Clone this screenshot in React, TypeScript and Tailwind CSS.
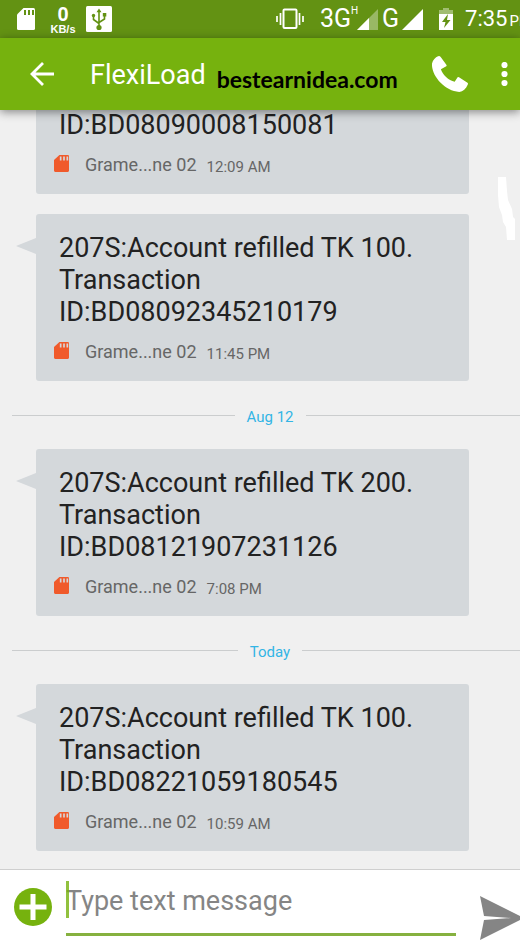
import { Fragment } from "react";

type Message = {
  id: string;
  time: string;
  amount?: number;
  day?: string;
};

// The oldest entry has no amount: only the tail of its text is in view
const messages: Message[] = [
  { id: "BD08090008150081", time: "12:09 AM" },
  { id: "BD08092345210179", amount: 100, time: "11:45 PM" },
  { id: "BD08121907231126", amount: 200, time: "7:08 PM", day: "Aug 12" },
  { id: "BD08221059180545", amount: 100, time: "10:59 AM", day: "Today" },
];

export default function App() {
  return (
    <div className="flex min-h-screen flex-col overflow-hidden bg-[#f0f0f0] font-['Roboto',sans-serif]">
      <StatusBar />
      <AppBar />

      {/* Conversation, newest message at the bottom */}
      <main className="relative flex flex-1 flex-col justify-end pb-[18px]">
        {messages.map((message, index) => (
          <Fragment key={message.id}>
            {message.day ? (
              <DayDivider label={message.day} />
            ) : (
              index > 0 && <div className="h-5 shrink-0" />
            )}
            <Bubble message={message} />
          </Fragment>
        ))}
        <svg className="absolute top-[67px] right-1 h-16 w-5" viewBox="0 0 20 64" fill="#fff" aria-hidden="true">
          <path d="M2 0h8l1 14 1 9 4 9 1 8 2 2v21h-8l-1-13-3-5-1-7-3-8-1-12z" />
        </svg>
      </main>

      <Composer />
    </div>
  );
}

function StatusBar() {
  return (
    <div className="flex h-[38px] shrink-0 items-center overflow-hidden bg-[#639213] pl-[17px] text-white">
      <SdCard className="h-[22px] w-[18px] shrink-0" fill="#fff" slots="#639213" />
      <div className="ml-3.5 flex w-7 shrink-0 flex-col items-center font-['Liberation_Sans',sans-serif] font-bold">
        <span className="text-xl leading-5">0</span>
        <span className="text-[11px] leading-[10px]">KB/s</span>
      </div>
      <svg className="ml-[9px] h-[26px] w-[26px] shrink-0" viewBox="0 0 26 26" aria-hidden="true">
        <rect width="26" height="26" rx="1.5" fill="#fff" />
        <g fill="none" stroke="#639213" strokeWidth="1.6">
          <path d="M13 5v16M7.500 9v4.500l5.500 4M18.500 9v4l-5.500 3.500" />
        </g>
        <g fill="#639213">
          <path d="M13 2.500l2.500 3.800h-5z" />
          <circle cx="13" cy="21.500" r="2.600" />
          <circle cx="7.500" cy="9.500" r="1.700" />
          <path d="M16.800 7h3.500v3.500h-3.500z" />
        </g>
      </svg>

      <div className="-mr-3 ml-auto flex shrink-0 items-center">
        <svg className="h-[22px] w-7" viewBox="0 0 28 22" aria-hidden="true">
          <rect x="7.500" y="1.500" width="13" height="18.500" rx="1" fill="none" stroke="#fff" strokeWidth="2" />
          <path d="M1 8v6M4.500 5v12M23.500 5v12M27 8v6" stroke="#fff" strokeWidth="1.700" />
        </svg>
        <span className="ml-4 flex w-[37px] items-start text-[25px] leading-7">
          3G<span className="text-[10px] leading-3">H</span>
        </span>
        <svg className="h-[21px] w-[21px]" viewBox="0 0 21 21" aria-hidden="true">
          <path d="M0 21L21 0v21z" fill="#fff" opacity=".35" />
          <path d="M0 21L12 9v12z" fill="#fff" />
        </svg>
        <span className="ml-1 w-[18px] text-[25px] leading-7">G</span>
        <svg className="ml-0.5 h-[21px] w-[21px]" viewBox="0 0 21 21" fill="#fff" aria-hidden="true">
          <path d="M0 21L21 0v21z" />
        </svg>
        <svg className="ml-4 h-[22px] w-3.5" viewBox="0 0 14 22" aria-hidden="true">
          <path d="M4 0h6v2h4v5H0V2h4z" fill="#fff" opacity=".4" />
          <path d="M0 6h14v16H0z" fill="#fff" />
          <path d="M9 6L3 14h3.500L5 20l6.500-8H8z" fill="#639213" />
        </svg>
        <span className="ml-3 flex items-baseline gap-0.5 pt-0.5 text-[22px] leading-7">
          7:35<span className="text-[15px]">PM</span>
        </span>
      </div>
    </div>
  );
}

function AppBar() {
  return (
    <header className="z-10 flex h-[72px] shrink-0 items-center bg-[#76b20e] pl-[30px] shadow-[0_2px_9px_rgba(0,0,0,0.45)]">
      <button aria-label="Back">
        <svg className="h-6 w-6" viewBox="0 0 24 24" fill="none" stroke="#fff" strokeWidth="2.800" aria-hidden="true">
          <path d="M24 12H3M13 1L2 12l11 11" />
        </svg>
      </button>
      <h1 className="ml-9 pt-0.5 text-[27px] leading-8 text-white">FlexiLoad</h1>
      <span className="ml-[11px] pt-2.5 font-['Lato',sans-serif] text-[23px] leading-6 font-bold text-black">
        bestearnidea.com
      </span>
      <button className="ml-auto" aria-label="Call">
        <svg className="h-9 w-9" viewBox="0 0 36 36" fill="#fff" aria-hidden="true">
          <path d="M7.300 0L8.500.8l6.200 8.500-.4.900-5.400 3c1.600 5.300 7.600 11.300 13.800 12.500l2.900-4.500q.6-.4 1.400.1l8.500 5.500q.8.800.3 1.800C34 33 31 35.500 27.300 36 12 35-1 19 0 7.500.8 4 3.500 1.200 6 .2z" />
        </svg>
      </button>
      <button className="mr-3 ml-[33px]" aria-label="More options">
        <svg className="h-6 w-[7px]" viewBox="0 0 7 24" fill="#fff" aria-hidden="true">
          <circle cx="3.500" cy="3" r="3.100" />
          <circle cx="3.500" cy="12" r="3.100" />
          <circle cx="3.500" cy="21" r="3.100" />
        </svg>
      </button>
    </header>
  );
}

function DayDivider({ label }: { label: string }) {
  return (
    <div className="-mr-2 flex h-[68px] shrink-0 items-center gap-3 pl-3">
      <div className="h-px flex-1 bg-[#cbcdce]" />
      <span className="pt-1 text-[15px] leading-5 text-[#33b5e5]">{label}</span>
      <div className="h-px flex-1 bg-[#cbcdce]" />
    </div>
  );
}

function Bubble({ message }: { message: Message }) {
  const { id, amount, time } = message;

  return (
    <article
      className={
        amount
          ? "relative mr-[51px] ml-9 shrink-0 rounded-[3px] bg-[#d4d8db] pt-[18px] pb-[15px] pl-[18px]"
          : "relative -mt-px mr-[51px] ml-9 shrink-0 rounded-b-[3px] bg-[#d4d8db] pb-[15px] pl-[18px]"
      }
    >
      {amount && (
        <svg className="absolute top-6 -left-5 h-4 w-5" viewBox="0 0 20 16" fill="#d4d8db" aria-hidden="true">
          <path d="M20 0v16L0 8z" />
        </svg>
      )}
      <p className="pl-[5px] text-[27px] leading-8 text-[#222]">
        {amount && (
          <>
            207S:Account refilled TK {amount}.
            <br />
            Transaction
            <br />
          </>
        )}
        ID:{id}
      </p>
      <div className="mt-2.5 flex h-7 items-center text-[#666]">
        <SdCard className="mb-1 h-[17px] w-[15px]" fill="#f05a2b" slots="#d4d8db" />
        <span className="ml-4 text-lg leading-6">Grame...ne 02</span>
        <span className="ml-2.5 pt-1 text-[15px] leading-5">{time}</span>
      </div>
    </article>
  );
}

function Composer() {
  return (
    <form className="flex h-[78px] shrink-0 items-start overflow-hidden border-t border-[#cfcfcf] bg-white pl-3.5">
      <button type="button" className="mt-[18px] shrink-0" aria-label="Add attachment">
        <svg className="h-[38px] w-[38px]" viewBox="0 0 38 38" aria-hidden="true">
          <circle cx="19" cy="19" r="19" fill="#76b20e" />
          <path d="M19 6v26M5.500 19h27" stroke="#fff" strokeWidth="5" />
        </svg>
      </button>
      <div className="relative ml-3.5 min-w-0 flex-1">
        <input
          type="text"
          aria-label="Message"
          placeholder="Type text message"
          className="h-[66px] w-full border-b-[3px] border-[#86b13f] pb-0.5 text-[27px] text-[#222] outline-none placeholder:text-[#858585]"
        />
        <span className="absolute top-[11px] left-0 h-[37px] w-[3px] bg-[#76b20e]/80" />
      </div>
      <button type="button" className="mt-[26px] -mr-1 ml-6 shrink-0" aria-label="Send">
        <svg className="h-11 w-11" viewBox="0 0 44 44" fill="#858585" aria-hidden="true">
          <path d="M0 0l44 22L0 44l4-20 27-2-27-2z" />
        </svg>
      </button>
    </form>
  );
}

function SdCard({ className, fill, slots }: { className: string; fill: string; slots: string }) {
  return (
    <svg className={className} viewBox="0 0 18 22" preserveAspectRatio="none" aria-hidden="true">
      <path d="M6.500 0H16.500Q18 0 18 1.500V20.500Q18 22 16.500 22H1.500Q0 22 0 20.500V6.500z" fill={fill} />
      <path d="M8 2v5M12 2v5M16 2v5" stroke={slots} strokeWidth="2" />
    </svg>
  );
}
